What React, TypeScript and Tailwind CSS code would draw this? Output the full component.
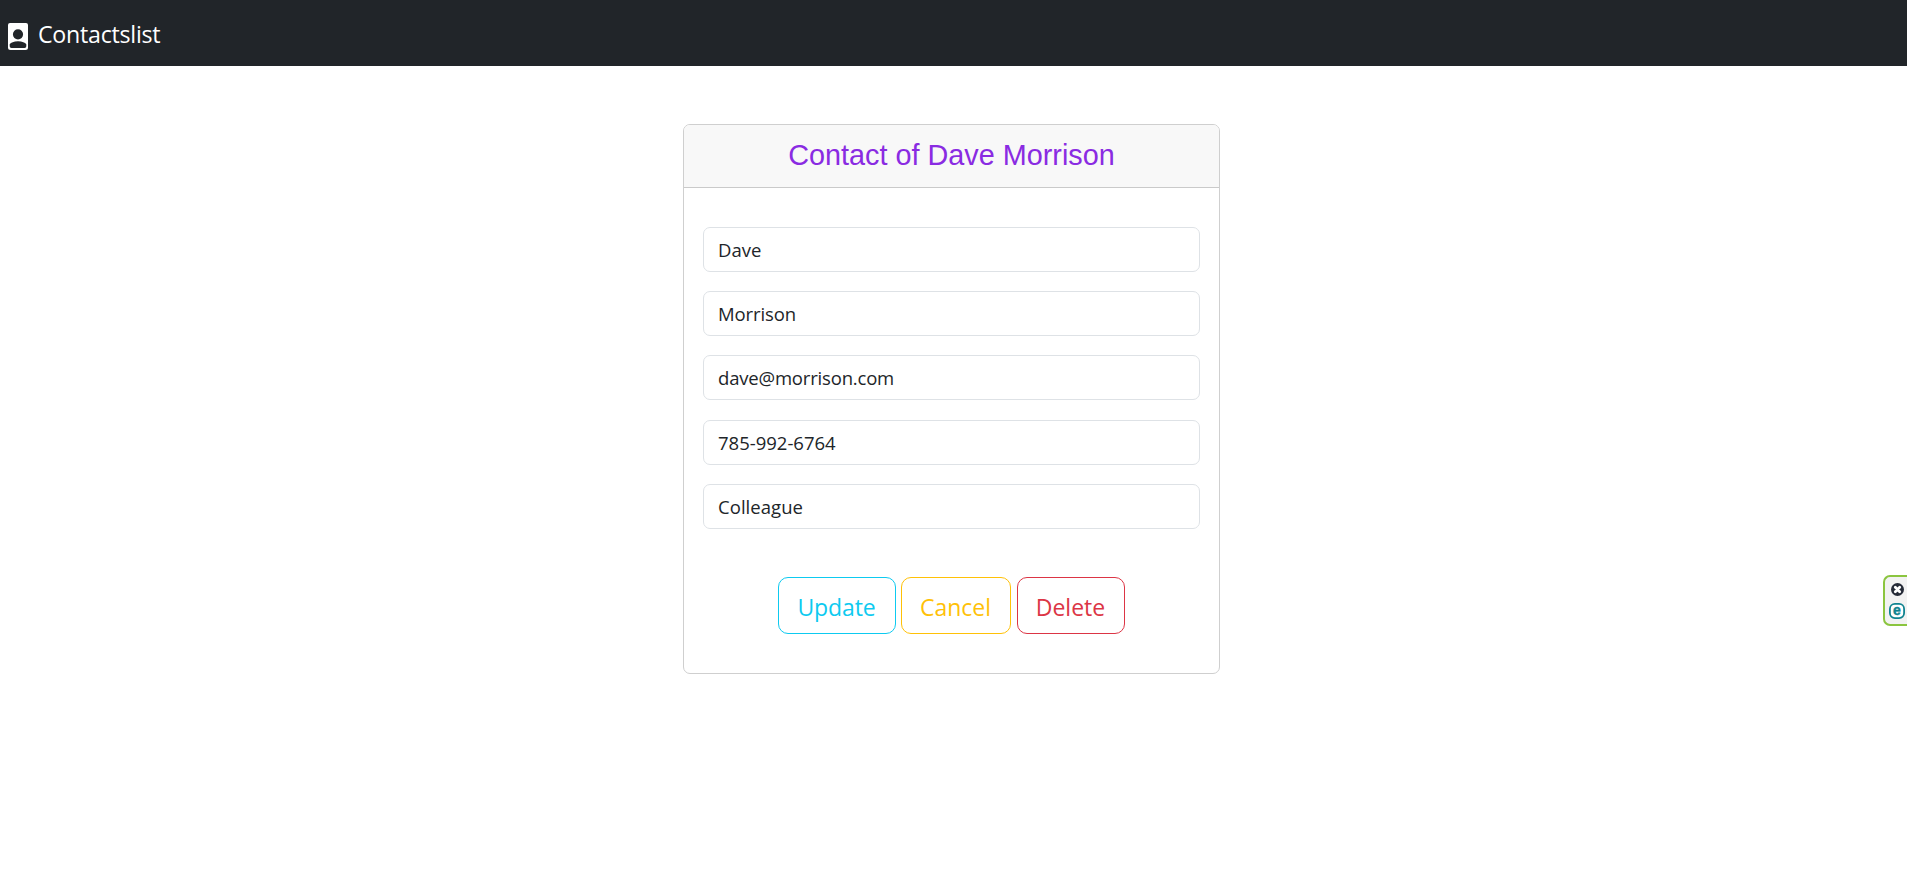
const fields = [
  { name: "firstName", value: "Dave", cls: "" },
  { name: "lastName", value: "Morrison", cls: "mt-[19px] tracking-[-0.1px]" },
  { name: "email", value: "dave@morrison.com", cls: "mt-[19px] tracking-[-0.18px]" },
  { name: "phone", value: "785-992-6764", cls: "mt-[20px]" },
  { name: "type", value: "Colleague", cls: "mt-[19px] tracking-[0.05px]" },
];

const buttons = [
  { label: "Update", cls: "w-[118px] border-[#0dcaf0] text-[#0dcaf0] tracking-[-0.1px]" },
  { label: "Cancel", cls: "ml-[5px] w-[110px] border-[#ffc107] text-[#ffc107]" },
  { label: "Delete", cls: "ml-[6px] w-[108px] border-[#dc3545] text-[#dc3545]" },
];

function PersonIcon() {
  return (
    <svg viewBox="0 0 20 27" className="h-[27px] w-[20px]" fill="currentColor">
      <path
        fillRule="evenodd"
        d="M2 0h16a2 2 0 0 1 2 2v22.500a2.500 2.500 0 0 1-2.500 2.500h-15a2.500 2.500 0 0 1-2.500-2.500V2a2 2 0 0 1 2-2zM10 6.200a5.100 5.100 0 1 0 0 10.200 5.100 5.100 0 0 0 0-10.200zM10 18.300c-4.400 0-7 1.400-8.300 3v2a1.700 1.700 0 0 0 1.700 1.700h13.200a1.700 1.700 0 0 0 1.700-1.700v-2c-1.300-1.600-3.900-3-8.300-3z"
      />
    </svg>
  );
}

function SideWidget() {
  return (
    <div className="fixed top-[575px] right-0 flex h-[51px] w-[24px] flex-col items-start rounded-l-[7px] border-2 border-r-0 border-[#8bc53f] bg-[#f2f2f2] pt-[6px] pl-[4px]">
      <svg viewBox="0 0 13 13" className="ml-[2px] h-[13px] w-[13px] shrink-0">
        <circle cx="6.5" cy="6.5" r="6.5" fill="#262b38" />
        <path d="M4.300 4.300l4.400 4.400M8.700 4.300L4.300 8.700" stroke="#fff" strokeWidth="2.800" strokeLinecap="round" />
      </svg>
      <svg viewBox="0 0 16 16" className="mt-[7px] h-[16px] w-[16px] shrink-0">
        <rect x="0.900" y="0.900" width="14.200" height="14.200" rx="5" fill="#fff" stroke="#0f8390" strokeWidth="1.800" />
        <text
          x="8"
          y="12"
          textAnchor="middle"
          fill="#0f8390"
          stroke="#0f8390"
          strokeWidth="0.400"
          className="font-['Liberation_Sans',sans-serif] text-[14px] font-bold"
        >
          e
        </text>
      </svg>
    </div>
  );
}

export default function App() {
  return (
    <div className="min-h-screen bg-white font-['Open_Sans',sans-serif] text-[#212529]">
      <nav className="flex h-[66px] items-start bg-[#212529] pl-[8px] text-white">
        <div className="pt-[23px]">
          <PersonIcon />
        </div>
        <span className="ml-[10px] pt-[16px] text-[23.2px] leading-[36px] tracking-[-0.25px]">Contactslist</span>
      </nav>
      <main className="flex pt-[58px] pl-[683px]">
        <section className="h-[550px] w-[537px] overflow-hidden rounded-[7px] border border-[#cfcfcf]">
          <header className="flex h-[63px] justify-center border-b border-[#cacaca] bg-[#f8f8f8] pt-[12px]">
            <h1 className="font-['Liberation_Sans',sans-serif] text-[28.8px] leading-[36px] text-[#8a2be2]">
              Contact of Dave Morrison
            </h1>
          </header>
          <form className="flex flex-col px-[19px] pt-[39px]">
            {fields.map((f) => (
              <input
                key={f.name}
                name={f.name}
                defaultValue={f.value}
                className={`h-[45px] rounded-[7px] border border-[#dee2e6] px-[14px] text-[18.5px] outline-none ${f.cls}`}
              />
            ))}
            <div className="mt-[48px] flex justify-center pr-px">
              {buttons.map((b) => (
                <button
                  key={b.label}
                  type="button"
                  className={`h-[57px] rounded-[10px] border pt-[3px] text-[23px] leading-[36px] ${b.cls}`}
                >
                  {b.label}
                </button>
              ))}
            </div>
          </form>
        </section>
      </main>
      <SideWidget />
    </div>
  );
}
